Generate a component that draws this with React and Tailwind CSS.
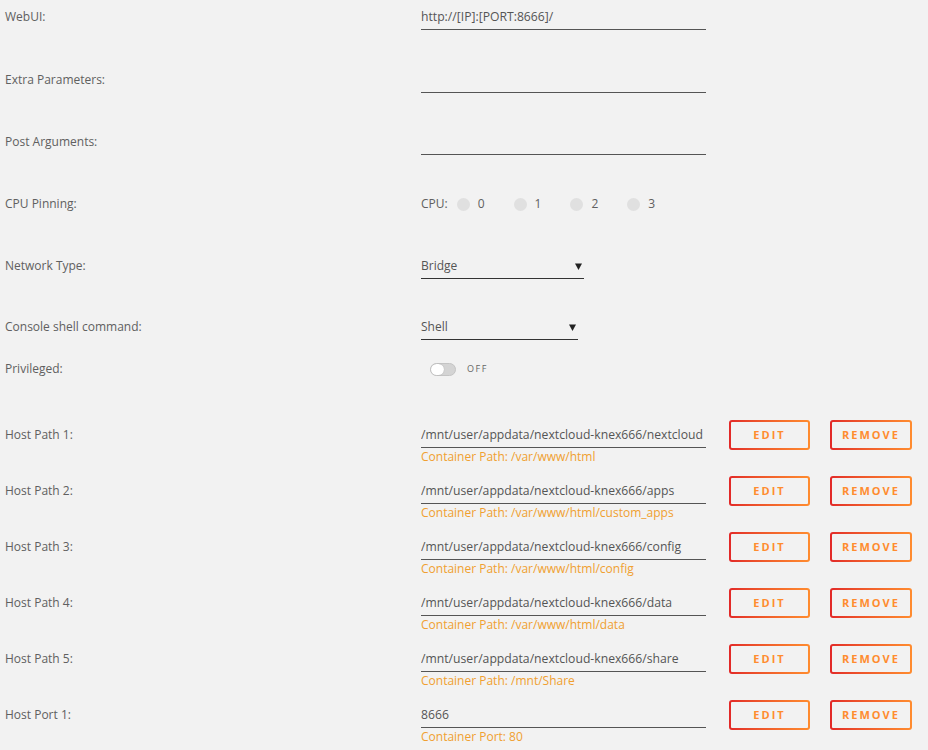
import React from "react";

const hostPaths = [
  { label: "Host Path 1:", value: "/mnt/user/appdata/nextcloud-knex666/nextcloud", note: "Container Path: /var/www/html" },
  { label: "Host Path 2:", value: "/mnt/user/appdata/nextcloud-knex666/apps", note: "Container Path: /var/www/html/custom_apps" },
  { label: "Host Path 3:", value: "/mnt/user/appdata/nextcloud-knex666/config", note: "Container Path: /var/www/html/config" },
  { label: "Host Path 4:", value: "/mnt/user/appdata/nextcloud-knex666/data", note: "Container Path: /var/www/html/data" },
  { label: "Host Path 5:", value: "/mnt/user/appdata/nextcloud-knex666/share", note: "Container Path: /mnt/Share" },
  { label: "Host Port 1:", value: "8666", note: "Container Port: 80" },
];

const Label = ({ children }) => (
  <div className="w-[421px] shrink-0 pl-[5px] text-[12px] leading-[20px] text-[#606060]">{children}</div>
);

const TextField = ({ value, width = "w-[285px]" }) => (
  <div className={`${width} border-b border-[#555] pb-[2px] text-[12.2px] leading-[20px] text-[#555] whitespace-nowrap overflow-hidden`}>
    {value || "\u00a0"}
  </div>
);

const Caret = () => (
  <svg width="7" height="7" viewBox="0 0 7 7" className="mt-[1px]">
    <path d="M0 0.5 H7 L3.5 7 Z" fill="#222" />
  </svg>
);

const SelectField = ({ value, width }) => (
  <div className={`${width} flex items-center justify-between border-b border-[#333] pb-[2px] pr-[2px] text-[12px] leading-[20px] text-[#555]`}>
    <span>{value}</span>
    <Caret />
  </div>
);

const GradientButton = ({ children, width }) => (
  <div className={`${width} h-[30px] rounded-[3px] bg-linear-to-r from-[#e22828] to-[#ff8c2f] p-[2px]`}>
    <div className="flex h-full w-full items-center justify-center rounded-[1px] bg-[#f2f2f2] text-[11px] font-bold tracking-[2px] text-[#ff8c2f]">
      {children}
    </div>
  </div>
);

export default function App() {
  return (
    <div
      className="min-h-[750px] w-[928px] bg-[#f2f2f2] pt-[7px]"
      style={{ fontFamily: '"Open Sans", "Noto Sans", sans-serif' }}
    >
      <div className="flex h-[63px] items-start">
        <Label>WebUI:</Label>
        <TextField value="http://[IP]:[PORT:8666]/" />
      </div>
      <div className="flex h-[62px] items-start">
        <Label>Extra Parameters:</Label>
        <TextField value="" />
      </div>
      <div className="flex h-[62px] items-start">
        <Label>Post Arguments:</Label>
        <TextField value="" />
      </div>
      <div className="flex h-[62px] items-start">
        <Label>CPU Pinning:</Label>
        <div className="flex items-center text-[12px] leading-[20px] text-[#606060]">
          <span className="mr-[9px]">CPU:</span>
          {[0, 1, 2, 3].map((n) => (
            <div key={n} className="mr-[29px] flex items-center">
              <span className="mr-[8px] h-[13px] w-[13px] rounded-full bg-[#e0e0e0]" />
              <span>{n}</span>
            </div>
          ))}
        </div>
      </div>
      <div className="flex h-[61px] items-start">
        <Label>Network Type:</Label>
        <SelectField value="Bridge" width="w-[163px]" />
      </div>
      <div className="flex h-[42px] items-start">
        <Label>Console shell command:</Label>
        <SelectField value="Shell" width="w-[157px]" />
      </div>
      <div className="flex h-[66px] items-start">
        <Label>Privileged:</Label>
        <div className="flex h-[20px] items-center pl-[9px]">
          <div className="relative h-[13px] w-[26px] rounded-full border border-[#c4c4c4] bg-[#d4d4d4]">
            <span className="absolute left-0 top-0 h-[11px] w-[13px] rounded-full bg-white shadow-[0_0_1px_#999]" />
          </div>
          <span className="ml-[11px] text-[9px] tracking-[1.5px] text-[#666]">OFF</span>
        </div>
      </div>
      {hostPaths.map((p) => (
        <div key={p.label} className="flex h-[56px] items-start">
          <Label>{p.label}</Label>
          <div className="flex flex-col">
            <TextField value={p.value} />
            <div className="pt-[1px] text-[12px] leading-[16px] text-[#f0a030]">{p.note}</div>
          </div>
          <div className="-mt-[5px] ml-[23px] flex">
            <GradientButton width="w-[81px]">EDIT</GradientButton>
            <div className="w-[20px]" />
            <GradientButton width="w-[82px]">REMOVE</GradientButton>
          </div>
        </div>
      ))}
    </div>
  );
}
